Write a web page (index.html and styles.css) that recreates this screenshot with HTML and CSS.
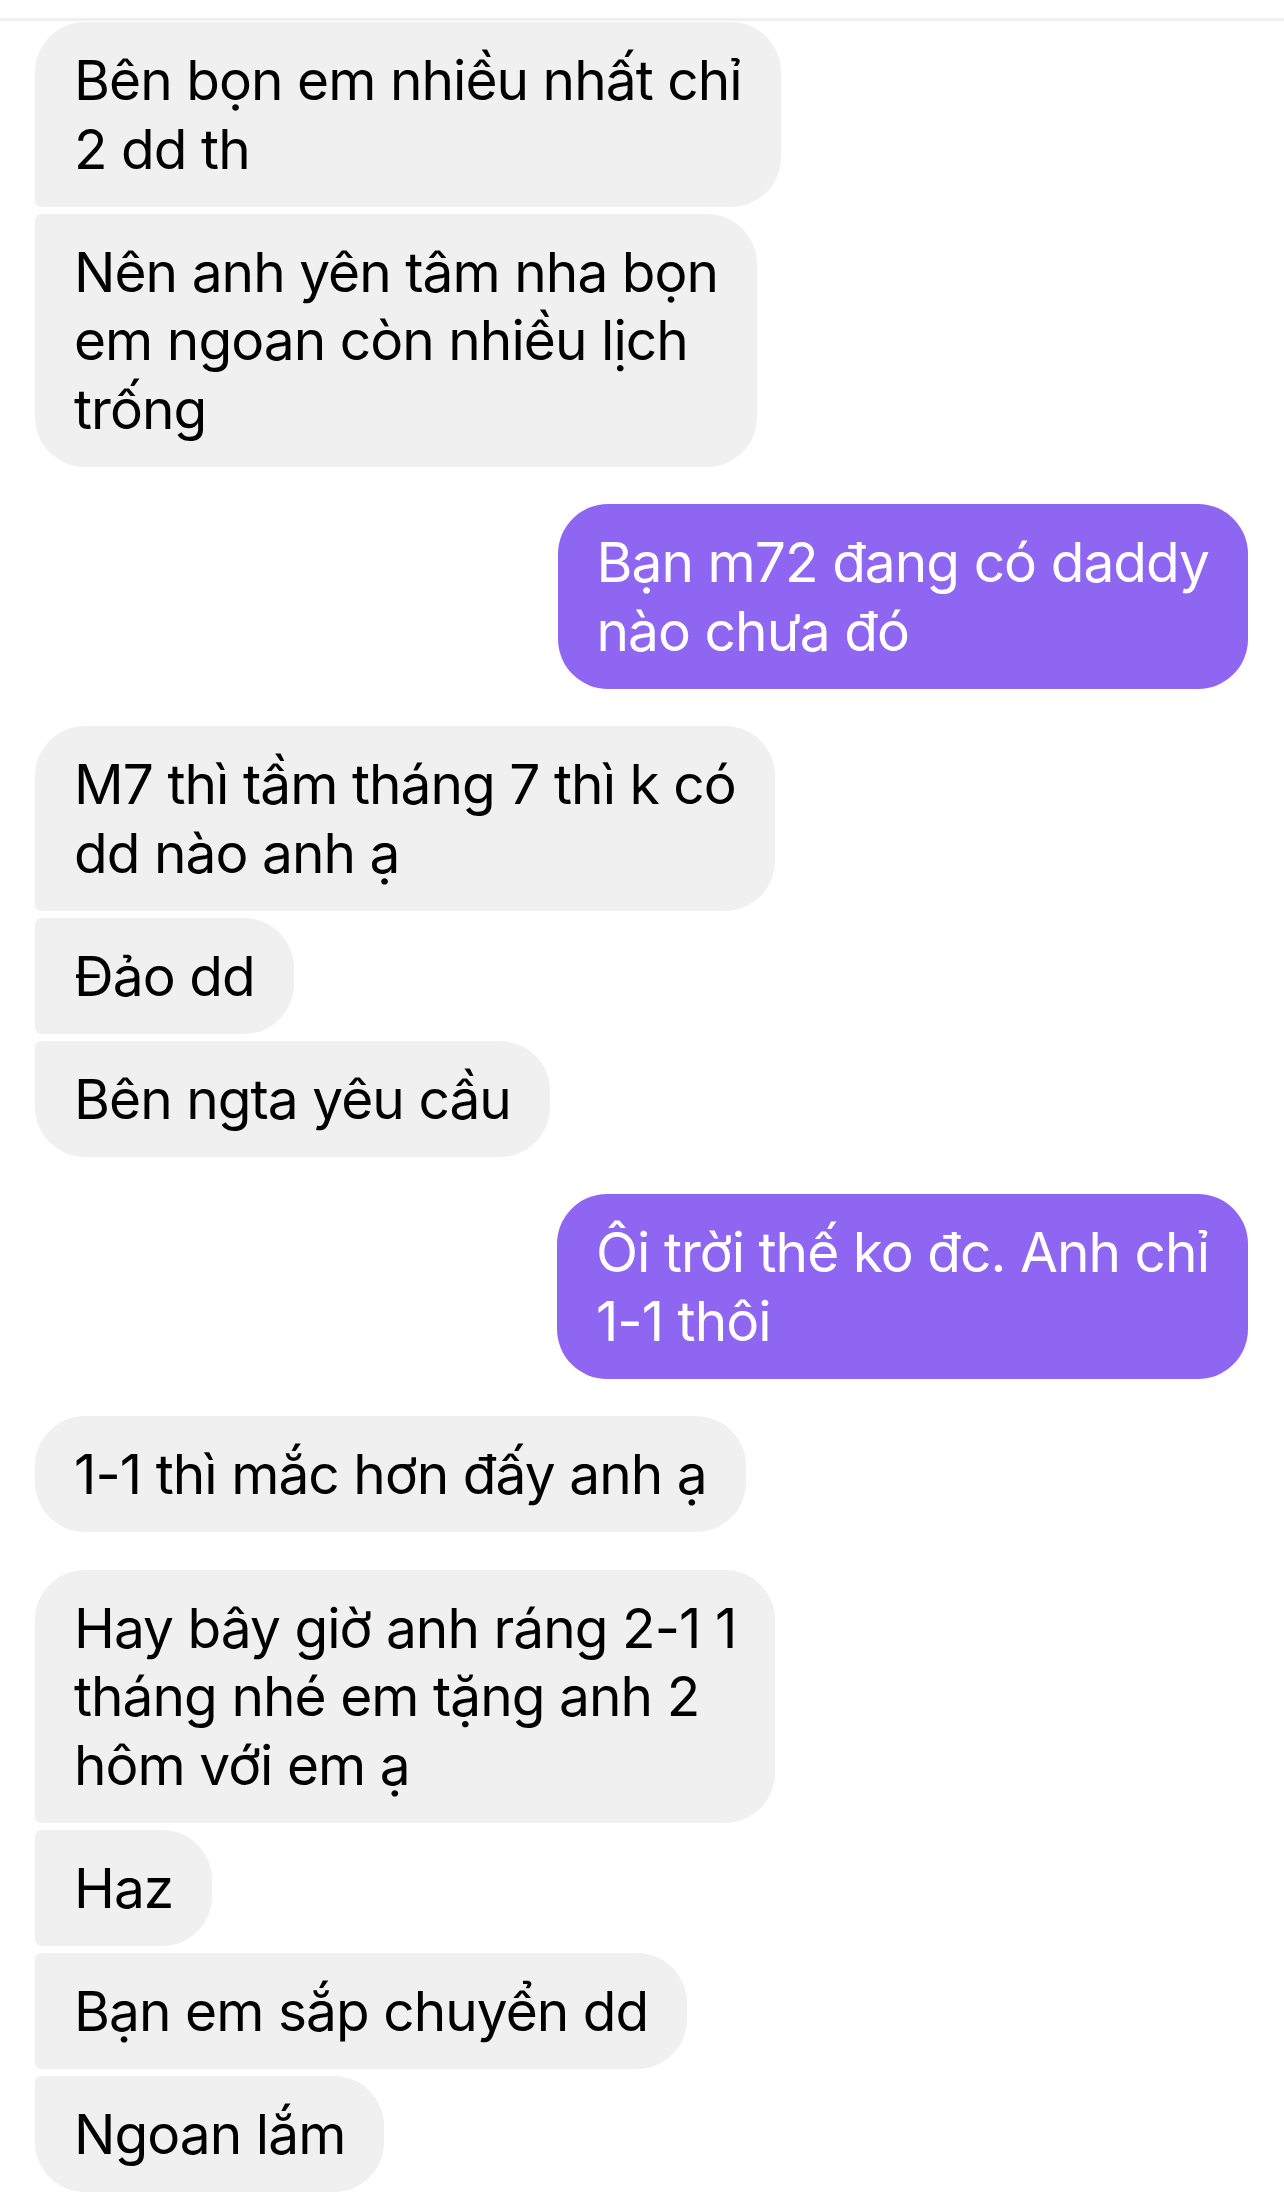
FILE: index.html
```html
<!DOCTYPE html>
<html lang="vi">
<head>
<meta charset="utf-8">
<title>Chat</title>
<link rel="stylesheet" href="styles.css">
</head>
<body>
<div class="topbar"></div>
<div class="thread">
  <div class="group in">
    <div class="bubble first">Bên bọn em nhiều nhất chỉ<br>2 dd th</div>
    <div class="bubble last">Nên anh yên tâm nha bọn<br>em ngoan còn nhiều lịch<br>trống</div>
  </div>
  <div class="group out">
    <div class="bubble single">Bạn m72 đang có daddy<br>nào chưa đó</div>
  </div>
  <div class="group in">
    <div class="bubble first">M7 thì tầm tháng 7 thì k có<br>dd nào anh ạ</div>
    <div class="bubble middle">Đảo dd</div>
    <div class="bubble last">Bên ngta yêu cầu</div>
  </div>
  <div class="group out">
    <div class="bubble single">Ôi trời thế ko đc. Anh chỉ<br>1-1 thôi</div>
  </div>
  <div class="group in">
    <div class="bubble single">1-1 thì mắc hơn đấy anh ạ</div>
  </div>
  <div class="group in">
    <div class="bubble first">Hay bây giờ anh ráng 2-1 1<br>tháng nhé em tặng anh 2<br>hôm với em ạ</div>
    <div class="bubble middle">Haz</div>
    <div class="bubble middle">Bạn em sắp chuyển dd</div>
    <div class="bubble last">Ngoan lắm</div>
  </div>
</div>
</body>
</html>
```
FILE: styles.css
```css
* { box-sizing: border-box; }
html, body { margin: 0; padding: 0; background: #fff; }
body {
  font-family: Inter, "Noto Sans", "Liberation Sans", sans-serif;
  width: 1284px;
  height: 2195px;
  overflow: hidden;
}
.topbar {
  height: 21px;
  border-bottom: 3px solid #f0f0f0;
}
.thread {
  display: flex;
  flex-direction: column;
  gap: 37.5px;
  padding: 1px 36px 0 35px;
}
.group {
  display: flex;
  flex-direction: column;
  gap: 7px;
}
.group.in { align-items: flex-start; }
.group.out { align-items: flex-end; }
.bubble {
  font-size: 55px;
  line-height: 68.5px;
  letter-spacing: -0.95px;
  padding: 24px 39px 23.5px 39px;
  white-space: nowrap;
  border-radius: 50px;
}
.in .bubble { background: #f0f0f0; color: #000; }
.out .bubble { background: #8f66f2; color: #fff; }
.in .bubble.first { border-radius: 50px 50px 50px 6px; }
.in .bubble.middle { border-radius: 6px 50px 50px 6px; }
.in .bubble.last { border-radius: 6px 50px 50px 50px; }
```
